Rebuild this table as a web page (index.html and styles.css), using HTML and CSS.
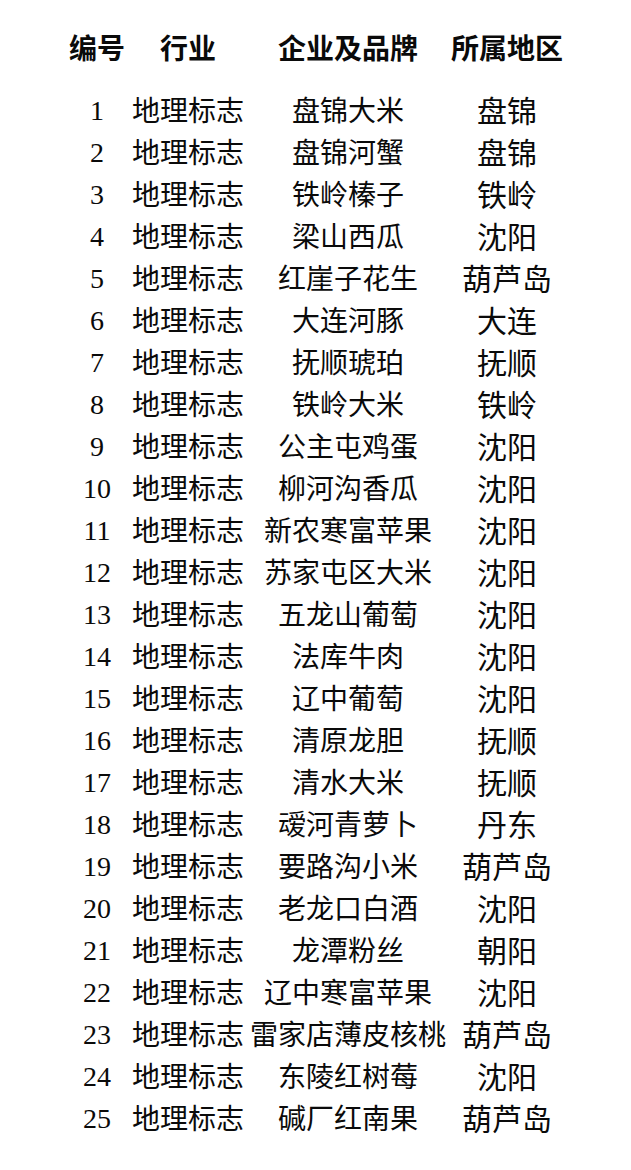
FILE: index.html
```html
<!DOCTYPE html>
<html lang="zh">
<head>
<meta charset="utf-8">
<link rel="stylesheet" href="styles.css">
</head>
<body>
<div class="table">
  <div class="row head">
    <div class="c">编号</div><div class="c">行业</div><div class="c">企业及品牌</div><div class="c">所属地区</div>
  </div>
  <div class="body">
    <div class="row"><div class="c n">1</div><div class="c">地理标志</div><div class="c">盘锦大米</div><div class="c r">盘锦</div></div>
    <div class="row"><div class="c n">2</div><div class="c">地理标志</div><div class="c">盘锦河蟹</div><div class="c r">盘锦</div></div>
    <div class="row"><div class="c n">3</div><div class="c">地理标志</div><div class="c">铁岭榛子</div><div class="c r">铁岭</div></div>
    <div class="row"><div class="c n">4</div><div class="c">地理标志</div><div class="c">梁山西瓜</div><div class="c r">沈阳</div></div>
    <div class="row"><div class="c n">5</div><div class="c">地理标志</div><div class="c">红崖子花生</div><div class="c r">葫芦岛</div></div>
    <div class="row"><div class="c n">6</div><div class="c">地理标志</div><div class="c">大连河豚</div><div class="c r">大连</div></div>
    <div class="row"><div class="c n">7</div><div class="c">地理标志</div><div class="c">抚顺琥珀</div><div class="c r">抚顺</div></div>
    <div class="row"><div class="c n">8</div><div class="c">地理标志</div><div class="c">铁岭大米</div><div class="c r">铁岭</div></div>
    <div class="row"><div class="c n">9</div><div class="c">地理标志</div><div class="c">公主屯鸡蛋</div><div class="c r">沈阳</div></div>
    <div class="row"><div class="c n">10</div><div class="c">地理标志</div><div class="c">柳河沟香瓜</div><div class="c r">沈阳</div></div>
    <div class="row"><div class="c n">11</div><div class="c">地理标志</div><div class="c">新农寒富苹果</div><div class="c r">沈阳</div></div>
    <div class="row"><div class="c n">12</div><div class="c">地理标志</div><div class="c">苏家屯区大米</div><div class="c r">沈阳</div></div>
    <div class="row"><div class="c n">13</div><div class="c">地理标志</div><div class="c">五龙山葡萄</div><div class="c r">沈阳</div></div>
    <div class="row"><div class="c n">14</div><div class="c">地理标志</div><div class="c">法库牛肉</div><div class="c r">沈阳</div></div>
    <div class="row"><div class="c n">15</div><div class="c">地理标志</div><div class="c">辽中葡萄</div><div class="c r">沈阳</div></div>
    <div class="row"><div class="c n">16</div><div class="c">地理标志</div><div class="c">清原龙胆</div><div class="c r">抚顺</div></div>
    <div class="row"><div class="c n">17</div><div class="c">地理标志</div><div class="c">清水大米</div><div class="c r">抚顺</div></div>
    <div class="row"><div class="c n">18</div><div class="c">地理标志</div><div class="c">叆河青萝卜</div><div class="c r">丹东</div></div>
    <div class="row"><div class="c n">19</div><div class="c">地理标志</div><div class="c">要路沟小米</div><div class="c r">葫芦岛</div></div>
    <div class="row"><div class="c n">20</div><div class="c">地理标志</div><div class="c">老龙口白酒</div><div class="c r">沈阳</div></div>
    <div class="row"><div class="c n">21</div><div class="c">地理标志</div><div class="c">龙潭粉丝</div><div class="c r">朝阳</div></div>
    <div class="row"><div class="c n">22</div><div class="c">地理标志</div><div class="c">辽中寒富苹果</div><div class="c r">沈阳</div></div>
    <div class="row"><div class="c n">23</div><div class="c">地理标志</div><div class="c">雷家店薄皮核桃</div><div class="c r">葫芦岛</div></div>
    <div class="row"><div class="c n">24</div><div class="c">地理标志</div><div class="c">东陵红树莓</div><div class="c r">沈阳</div></div>
    <div class="row"><div class="c n">25</div><div class="c">地理标志</div><div class="c">碱厂红南果</div><div class="c r">葫芦岛</div></div>
  </div>
</div>
</body>
</html>
```
FILE: styles.css
```css
html, body {
  margin: 0;
  padding: 0;
  background: #ffffff;
}
body {
  font-family: "Noto Sans CJK SC", "Noto Sans", sans-serif;
  color: #0a0a0a;
  font-size: 28px;
}
.table {
  padding: 26px 0 0 62px;
}
.row {
  display: grid;
  grid-template-columns: 70px 112px 208px 110px;
  grid-template-rows: 42px;
  height: 42px;
  align-items: center;
}
.c {
  justify-self: center;
  white-space: nowrap;
  line-height: 42px;
}
.head .c {
  font-weight: 700;
}
.body {
  margin-top: 20px;
}
.n {
  font-family: "Liberation Serif", "Noto Sans CJK SC", serif;
  align-self: start;
  padding-top: 3px;
  line-height: 39px;
}
.r {
  font-size: 30px;
}
```
